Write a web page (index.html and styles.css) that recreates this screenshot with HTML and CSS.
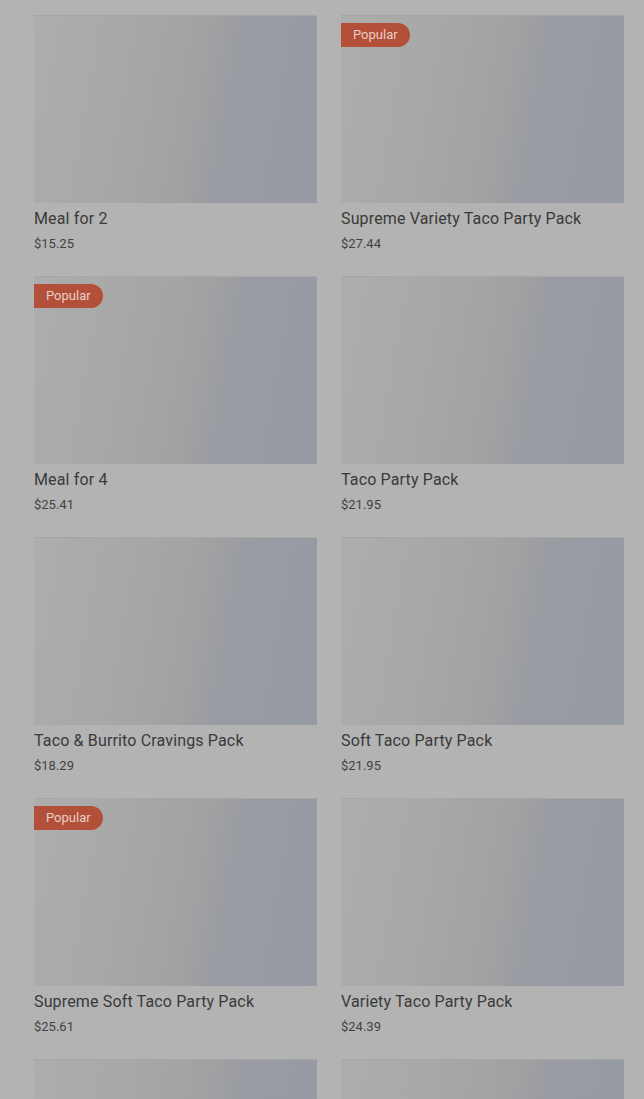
FILE: index.html
```html
<!DOCTYPE html>
<html lang="en">
<head>
    <meta charset="UTF-8">
    <meta name="viewport" content="width=device-width, initial-scale=1.0">
    <title>Party Packs</title>
    <link rel="stylesheet" href="styles.css">
</head>
<body>
    <div class="grid">
        <div class="card">
            <div class="pic"></div>
            <div class="name">Meal for 2</div>
            <div class="price">$15.25</div>
        </div>
        <div class="card">
            <div class="pic"><span class="badge">Popular</span></div>
            <div class="name">Supreme Variety Taco Party Pack</div>
            <div class="price">$27.44</div>
        </div>
        <div class="card">
            <div class="pic"><span class="badge">Popular</span></div>
            <div class="name">Meal for 4</div>
            <div class="price">$25.41</div>
        </div>
        <div class="card">
            <div class="pic"></div>
            <div class="name">Taco Party Pack</div>
            <div class="price">$21.95</div>
        </div>
        <div class="card">
            <div class="pic"></div>
            <div class="name">Taco &amp; Burrito Cravings Pack</div>
            <div class="price">$18.29</div>
        </div>
        <div class="card">
            <div class="pic"></div>
            <div class="name">Soft Taco Party Pack</div>
            <div class="price">$21.95</div>
        </div>
        <div class="card">
            <div class="pic"><span class="badge">Popular</span></div>
            <div class="name">Supreme Soft Taco Party Pack</div>
            <div class="price">$25.61</div>
        </div>
        <div class="card">
            <div class="pic"></div>
            <div class="name">Variety Taco Party Pack</div>
            <div class="price">$24.39</div>
        </div>
        <div class="card">
            <div class="pic"></div>
        </div>
        <div class="card">
            <div class="pic"></div>
        </div>
    </div>
</body>
</html>
```

FILE: styles.css
```css
*{
    box-sizing: border-box;
}
html {
    background-color: #b3b3b3;
}
body {
    margin: 0;
    height: 1099px;
    overflow: hidden;
    font-family: Roboto, "Liberation Sans", sans-serif;
    color: #3a3a3a;
}
.grid {
    display: grid;
    grid-template-columns: 283px 283px;
    column-gap: 24px;
    row-gap: 23px;
    padding: 15px 0 0 34px;
}
.pic {
    position: relative;
    height: 188px;
    background: linear-gradient(100deg, #adadad 0%, #a8a8a8 30%, #a2a2a2 55%, #989ba2 68%, #969aa3 100%);
    border-top: 1px solid #a6a6a6;
}
.badge {
    position: absolute;
    top: 7px;
    left: 0;
    height: 24px;
    line-height: 24px;
    padding: 0 12px 0 12px;
    border-radius: 0 12px 12px 0;
    background-color: #b3503a;
    color: #e8cfc9;
    font-size: 13px;
}
.name {
    margin-top: 6px;
    font-size: 16px;
    line-height: 20px;
    letter-spacing: 0.15px;
}
.price {
    margin-top: 6px;
    font-size: 13px;
    line-height: 18px;
    color: #424242;
}
```
